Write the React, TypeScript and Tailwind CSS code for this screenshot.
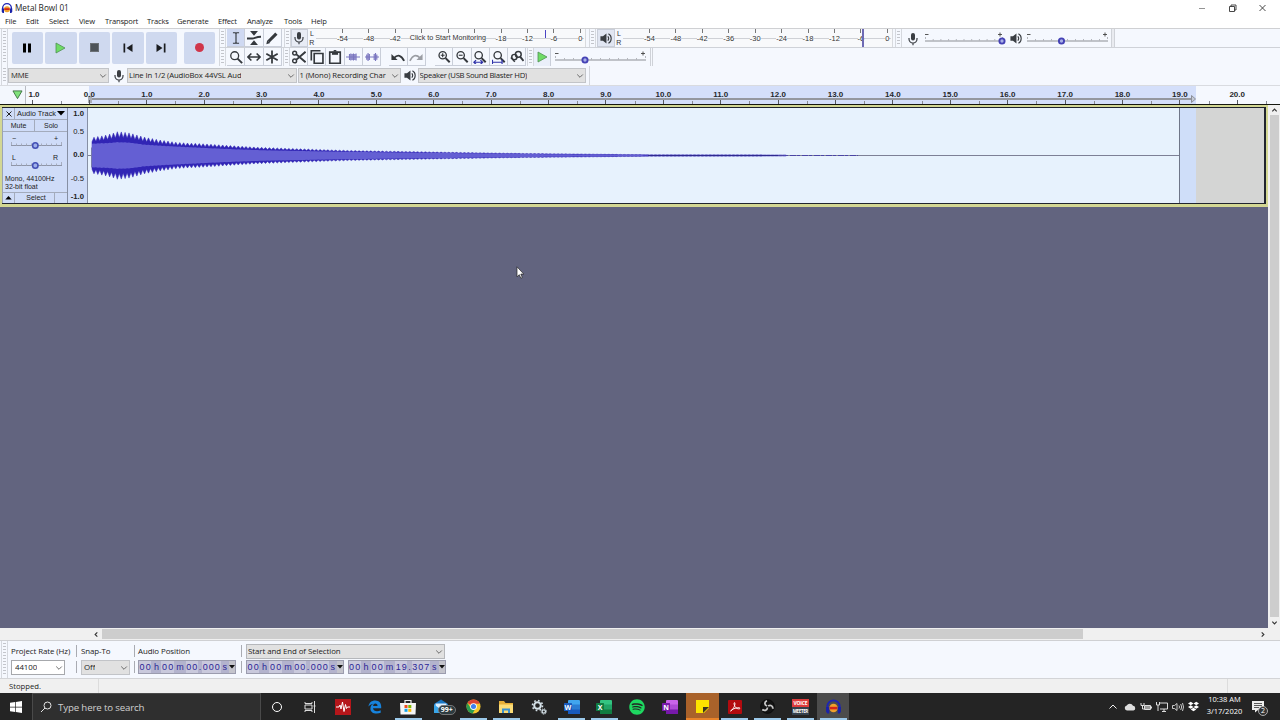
import type { ReactNode } from 'react';
import { FaDropbox, FaSpotify } from 'react-icons/fa';

const menu = [
  { label: 'File', w: 'w-[21px]' },
  { label: 'Edit', w: 'w-[23px]' },
  { label: 'Select', w: 'w-[30px]' },
  { label: 'View', w: 'w-[26px]' },
  { label: 'Transport', w: 'w-[42px]' },
  { label: 'Tracks', w: 'w-[30px]' },
  { label: 'Generate', w: 'w-[41px]' },
  { label: 'Effect', w: 'w-[29px]' },
  { label: 'Analyze', w: 'w-[37px]' },
  { label: 'Tools', w: 'w-[27px]' },
  { label: 'Help', w: 'w-[24px]' },
];

const playLevels = ['-54', '-48', '-42', '-36', '-30', '-24', '-18', '-12', '-6', '0'];
const recordLevels = ['-54', '-48', '-42', '', '', '', '-18', '-12', '-6', '0'];

const timeCells = [
  'w-[6px]', 'w-[6.5px]', 'w-[10px] bg-[#b3b3cd]', 'w-[6px]', 'w-[7px]', 'w-[11.5px] bg-[#b3b3cd]', 'w-[6px]',
  'w-[6px]', 'w-[4.5px] bg-[#b3b3cd]', 'w-[6px]', 'w-[6px]', 'w-[6.5px]', 'w-[8.5px] bg-[#b3b3cd]',
];

// envelope of the recording: [x, peak, rms] in pixels
const envelope = [
  [4, 18, 12], [16, 20, 12.5], [24, 22, 13], [30, 24, 13.5], [42, 22.5, 13], [56, 18.5, 11], [72, 15.5, 10],
  [90, 13, 9], [120, 11.5, 7.5], [150, 9.5, 6.2], [172, 8.2, 5.4], [220, 6.4, 4.4], [262, 5, 3.7],
  [342, 3.6, 2.7], [412, 2.4, 1.9], [452, 1.9, 1.4], [512, 1.3, 0.9], [562, 0.8, 0.3], [690, 0.6, 0.2], [1092, 0.35, 0.2],
];

function levelAt(x: number, k: number) {
  for (let i = 1; i < envelope.length; i++) {
    const a = envelope[i - 1];
    const b = envelope[i];
    if (x <= b[0]) return a[k] + ((b[k] - a[k]) * (x - a[0])) / (b[0] - a[0]);
  }
  return 0.3;
}

function wavePath(k: number, depth: number) {
  const top: string[] = [];
  const bottom: string[] = [];
  for (let i = 0; i * 1.95 + 4 < 700; i++) {
    const x = i * 1.95 + 4;
    const amp = levelAt(x, k) * (i % 2 ? 1 : 1 - depth);
    top.push(`${x.toFixed(1)},${(48 - amp).toFixed(2)}`);
    bottom.unshift(`${x.toFixed(1)},${(48 + amp).toFixed(2)}`);
  }
  return `M${top.concat(bottom).join('L')}Z`;
}

function Grip({ className = '' }: { className?: string }) {
  return (
    <div className={`flex h-full w-[7px] shrink-0 justify-center border-x border-[#d5d8de] py-[2px] ${className}`}>
      <div className="w-[3px] bg-[repeating-linear-gradient(#c3c5cb_0_1px,transparent_1px_3px)]"></div>
    </div>
  );
}

function Mic({ className = '' }: { className?: string }) {
  return (
    <svg viewBox="0 0 12 14" className={`h-[14px] w-[12px] shrink-0 ${className}`} fill="none" stroke="#3a3e43">
      <rect x="4" y="1" width="4" height="7.5" rx="2" fill="#3a3e43" stroke="none" />
      <path d="M2 6v1a4 4 0 0 0 8 0V6M6 11v2.2" strokeWidth="1.2" />
    </svg>
  );
}

function Speaker({ className = '' }: { className?: string }) {
  return (
    <svg viewBox="0 0 14 14" className={`h-[13px] w-[14px] shrink-0 ${className}`} fill="none" stroke="#3a3e43">
      <path d="M1 4.7h2.7L7.5 1.5v11L3.7 9.3H1z" fill="#3a3e43" stroke="none" />
      <path d="M9 4.6q1.8 2.4 0 4.8M9.6 1.8c4 1.9 4 8.5 0 10.4" strokeWidth="1.2" />
    </svg>
  );
}

function Chevron() {
  return (
    <svg viewBox="0 0 8 6" className="h-[6px] w-[8px] shrink-0" fill="none" stroke="#4b4b4b" strokeWidth=".8">
      <path d="M1.2 1.5 4 4.3l2.8-2.8" />
    </svg>
  );
}

function Combo({ children, className = '' }: { children: ReactNode; className?: string }) {
  return (
    <div className={`flex h-[15px] shrink-0 items-center justify-between overflow-hidden border pr-px leading-none whitespace-nowrap ${className}`}>
      <span className="overflow-hidden py-0.5">{children}</span>
      <Chevron />
    </div>
  );
}

function Tool({ children, className = '' }: { children?: ReactNode; className?: string }) {
  return (
    <div className={`flex h-[18px] w-[18.3px] shrink-0 items-center justify-center border-r border-b border-[#c9ced9] ${className}`}>
      <svg viewBox="0 0 16 16" className="size-[14px]" fill="none" stroke="#34383d" strokeWidth="1.7">{children}</svg>
    </div>
  );
}

function Meter({ levels, marker }: { levels: string[]; marker: ReactNode }) {
  return (
    <div className="relative flex h-[18px] w-[270px] shrink-0 border-r border-[#d8dade] bg-[#f8f9fb] pl-[13.3px] font-['Liberation_Sans'] text-[7.5px] leading-none text-[#333]">
      <div className="absolute top-[9px] left-0 h-px w-[268px] bg-[#cfd1d6]"></div>
      {levels.map((l, i) => (
        <div key={i} className="relative flex w-[26.45px] shrink-0 flex-col items-center">
          <div className="h-[4px] w-px bg-[#777]"></div>
          {l && <span className="mt-[2px] bg-[#f8f9fb]">{l}</span>}
        </div>
      ))}
      {marker}
    </div>
  );
}

function LeftRight() {
  return (
    <div className="flex w-[8px] shrink-0 flex-col items-center justify-between py-px font-['Liberation_Sans'] text-[7px] leading-none text-[#333]">
      <span>L</span>
      <span>R</span>
    </div>
  );
}

function Slider({ width, knob, className = '' }: { width: number; knob: number; className?: string }) {
  const step = (width - 1) / 10;
  return (
    <svg className={`h-[14px] shrink-0 overflow-visible ${className}`} width={width} viewBox={`0 0 ${width} 14`} fill="none">
      <path d={`M0 2.500h3.500M${width - 5} 2.500h4M${width - 3} .500v4`} stroke="#444" strokeWidth=".9" />
      <path d={`M0 9h${width}`} stroke="#8b8d93" strokeWidth="1.1" />
      {Array.from({ length: 11 }, (_, i) => (
        <path key={i} d={`M${0.5 + i * step} ${i % 10 ? 7 : 5}v2`} stroke="#b5b7bd" />
      ))}
      <circle cx={knob} cy="9" r="2.6" fill="#a9b0e8" stroke="#4542b5" strokeWidth="1.9" />
    </svg>
  );
}

function TrackSlider({ left, right }: { left: string; right: string }) {
  return (
    <div className="flex h-[19.5px] flex-col px-[8px] text-[7px] leading-none text-[#222]">
      <div className="flex h-[6px] items-center justify-between px-px">
        <span>{left}</span>
        <span>{right}</span>
      </div>
      <svg viewBox="0 0 51 9" className="h-[9px] w-[51px]" fill="none">
        <path d="M0 4.5h51" stroke="#8f96a8" />
        <path d="M.5 1v3M5.5 2.5v2M10.5 2.5v2M15.5 2.5v2M20.5 2.5v2M30.5 2.5v2M35.5 2.5v2M40.5 2.5v2M45.5 2.5v2M50.5 1v3" stroke="#a6adbf" />
        <circle cx="24.3" cy="4.5" r="2.7" fill="#9fb0ea" stroke="#4450b5" strokeWidth="1.6" />
      </svg>
    </div>
  );
}

function TimeBox({ value }: { value: string }) {
  return (
    <div className="flex h-[14px] w-[98px] shrink-0 border border-[#9b9cae] bg-[#c9c9dc] font-['Liberation_Sans'] text-[9px] leading-[13px] text-[#2b2496]">
      {value.split('').map((c, i) => (
        <span key={i} className={`text-center ${timeCells[i]}`}>{c}</span>
      ))}
      <div className="flex flex-1 items-center justify-center bg-[#c4c4cc]">
        <svg viewBox="0 0 6 4" className="h-[4px] w-[6px]"><path d="M0 0h6L3 3.5z" fill="#111" /></svg>
      </div>
    </div>
  );
}

function Separators({ className = '' }: { className?: string }) {
  return (
    <div className={`flex shrink-0 flex-col gap-1 pt-[4px] pl-[2px] ${className}`}>
      <div className="h-[12px] w-px bg-[#a9abb2]"></div>
      <div className="h-[12px] w-px bg-[#a9abb2]"></div>
    </div>
  );
}

function Lens({ children }: { children?: ReactNode }) {
  return (
    <>
      <circle cx="6.5" cy="6" r="4.2" strokeWidth="1.5" />
      <path d="m9.8 9.3 4.700 4.700" strokeWidth="2.3" />
      {children}
    </>
  );
}

function Headphones({ className = '' }: { className?: string }) {
  return (
    <svg viewBox="0 0 16 16" className={className} fill="none">
      <circle cx="8" cy="9.5" r="4" fill="#f0a02c" />
      <path d="M4.5 9.5h7" stroke="#d5251b" strokeWidth="2.4" />
      <path d="M2.2 10V8a5.8 5.8 0 0 1 11.6 0v2" stroke="#1d25b5" strokeWidth="1.8" />
      <path d="M1 8.5h3v6H2.2L1 13zM15 8.5h-3v6h1.8L15 13z" fill="#1a22a8" />
    </svg>
  );
}

function TransportButton({ children, className = '' }: { children: ReactNode; className?: string }) {
  return (
    <div className={`flex h-[32px] w-[31.5px] items-center justify-center rounded-[2px] bg-[#cfd9ef] ${className}`}>{children}</div>
  );
}

function Toolbars() {
  return (
    <div className="flex h-[38px] border-t border-[#cfd0d3] bg-[#f5f8fe]">
      <Grip className="ml-px" />
      <div className="flex w-[211px] shrink-0 gap-[2px] pt-[2.5px] pl-[3.5px]">
        <TransportButton>
          <svg viewBox="0 0 10 10" className="size-[10px]"><path d="M1 .5h3v9H1zM6 .5h3v9H6z" /></svg>
        </TransportButton>
        <TransportButton>
          <svg viewBox="0 0 11 12" className="h-[12px] w-[11px]"><path d="M1 1v10l9-5z" fill="#6fdc66" stroke="#4f8f54" strokeWidth=".8" /></svg>
        </TransportButton>
        <TransportButton>
          <div className="size-[9px] border border-[#6b7075] bg-[#4d5358]"></div>
        </TransportButton>
        <TransportButton>
          <svg viewBox="0 0 10 10" className="size-[10px]"><path d="M.5.5h1.7v9H.5zM9.5 1v8L3.5 5z" fill="#1b1d20" /></svg>
        </TransportButton>
        <TransportButton>
          <svg viewBox="0 0 10 10" className="size-[10px]"><path d="M9.5.5H7.8v9h1.7zM.5 1v8l6-4z" fill="#1b1d20" /></svg>
        </TransportButton>
        <TransportButton className="ml-[4.5px]">
          <div className="size-[9.5px] rounded-full bg-[#d0364a]"></div>
        </TransportButton>
      </div>

      <div className="flex flex-1 flex-col">
        <div className="flex h-[19px] border-b border-[#cfd2d8]">
          <Grip className="mr-px" />
          <Tool className="bg-[#cfd9f2]"><path d="M4.500 2h2.700l.8.800.8-.800h2.700M8 3v10M4.500 14h2.700l.8-.800.8.800h2.700" strokeWidth="1.3" /></Tool>
          <Tool>
            <path d="M3.500 0h9L8 5.500zM3.500 16h9L8 10.500z" fill="#34383d" stroke="none" />
            <path d="M-1 8.500h7c3 0 4-2 11-2" strokeWidth="2.200" />
          </Tool>
          <Tool><path d="M4 12 13 3" strokeWidth="3.600" /><path d="M1.500 15l1-4.500L6 13.800z" fill="#34383d" stroke="none" /></Tool>
          <Grip className="ml-[2px]" />
          <div className="flex h-[18px] w-[17px] items-center justify-center border border-[#c9ced9] bg-[#e8ecf5]"><Mic /></div>
          <LeftRight />
          <Meter
            levels={recordLevels}
            marker={
              <>
                <div className="absolute top-[5px] left-[87px] w-[90px] text-center text-[7.2px] whitespace-nowrap">
                  <span className="bg-[#f8f9fb] pb-px">Click to Start Monitoring</span>
                </div>
                <div className="absolute top-px left-[229px] h-[8px] w-[1.5px] bg-[#4a44c4]"></div>
              </>
            }
          />
          <Grip className="mr-px ml-[3px]" />
          <div className="flex h-[18px] w-[18px] items-center justify-center border border-[#c9ced9] bg-[#e1e6f2]"><Speaker /></div>
          <LeftRight />
          <Meter levels={playLevels} marker={<div className="absolute top-0 left-[239px] h-[18px] w-[2px] bg-[#6e6ab4]"></div>} />
          <Grip className="mr-[5px] ml-[2px]" />
          <Mic className="mt-[3px]" />
          <Slider width={78} knob={77} className="mt-[3px] ml-[6px]" />
          <Speaker className="mt-[3px] ml-[6px]" />
          <Slider width={81} knob={34.5} className="mt-[3px] ml-[4px]" />
          <div className="ml-[3px] h-[18px] w-[4px] border-x border-[#cfd2d8] bg-[#e9ebf0]"></div>
        </div>

        <div className="flex h-[19px] border-b border-[#cfd2d8]">
          <Grip className="mr-px" />
          <Tool><circle cx="6.500" cy="6.500" r="4.500" strokeWidth="1.500" /><path d="m9.800 9.800 5.200 5.200" strokeWidth="2.200" /></Tool>
          <Tool><path d="M1 8h14M5 4 1 8l4 4M11 4l4 4-4 4" strokeWidth="1.900" /></Tool>
          <Tool><path d="M8 .500v15M1.500 4.200l13 7.600M14.500 4.200l-13 7.600" strokeWidth="2" /></Tool>
          <Grip className="ml-px" />
          <Tool>
            <circle cx="3" cy="3.500" r="2.200" />
            <circle cx="3" cy="12.500" r="2.200" />
            <path d="m5 5 10.500 9M5 11l10.500-9" strokeWidth="2.200" />
          </Tool>
          <Tool><path d="M12 .800H1.500V12" strokeWidth="1.900" /><path d="M4.800 4h10v11.200h-10z" strokeWidth="1.900" /></Tool>
          <Tool><path d="M2 2.500h12v12.700H2z" strokeWidth="1.900" /><path d="M4.500 2h7v3.500h-7z" fill="#34383d" stroke="none" /><path d="M6.500.900h3" /></Tool>
          <Tool><path d="M0 8h16M4 4.500v7M5.500 4v8M7 4.500v7M8.500 4v8M10 4.500v7M11.500 4v8" stroke="#7a76c0" strokeWidth="1.300" /></Tool>
          <Tool><path d="M0 8h16M2 5v6M3.500 3.500v9M5 4.500v7M10.500 4.500v7M12 3.500v9M13.500 5v6" stroke="#7a76c0" strokeWidth="1.300" /></Tool>
          <div className="w-[8px]"></div>
          <Tool><path d="M3.500 9Q10 2.500 15 12.500" strokeWidth="2.200" /><path d="M.500 4.500v7h7z" fill="#34383d" stroke="none" /></Tool>
          <Tool><path d="M12.500 9Q6 2.500 1 12.500" stroke="#9a9da3" strokeWidth="1.800" /><path d="M15.500 4.500v7h-7z" fill="#9a9da3" stroke="none" /></Tool>
          <div className="w-[9px]"></div>
          <Tool><Lens><path d="M4.300 6h4.400M6.500 3.800v4.400" strokeWidth="1.300" /></Lens></Tool>
          <Tool><Lens><path d="M4.300 6h4.400" strokeWidth="1.300" /></Lens></Tool>
          <Tool><Lens><path d="M1 14h10M3.500 11.500 1 14l2.500 2.500M8.500 11.500 11 14l-2.500 2.500" stroke="#2e31a8" strokeWidth="1.400" /></Lens></Tool>
          <Tool><Lens><path d="M0 14h12M.500 11v5M11.500 11v5" stroke="#2e31a8" strokeWidth="1.400" /></Lens></Tool>
          <Tool><path d="m1 8.500 4.500 5" /><circle cx="5" cy="8" r="3" /><circle cx="9.500" cy="5" r="3.300" /><path d="m11.500 7.500 4 5" strokeWidth="2.200" /></Tool>
          <Grip className="ml-px" />
          <div className="flex h-[18px] w-[17px] items-center justify-center border-r border-[#c9ced9] bg-[#eaeffa]">
            <svg viewBox="0 0 11 12" className="h-[12px] w-[11px]"><path d="M1 1v10l9-5z" fill="#6fdc66" stroke="#4f8f54" strokeWidth=".8" /></svg>
          </div>
          <Slider width={91} knob={30} className="mt-[3px] ml-[4px]" />
          <div className="ml-[4px] h-[18px] w-[3px] border-x border-[#cfd2d8]"></div>
        </div>
      </div>
    </div>
  );
}

function DeviceBar() {
  return (
    <div className="flex h-[19px] items-center bg-[#f5f8fe] text-[7.7px] tracking-[-.015em] text-[#222]">
      <Grip className="ml-px" />
      <Combo className="w-[101px] border-[#c2c4c8] bg-[#e1e1e1] pl-[2px]">MME</Combo>
      <Mic className="ml-[3.5px]" />
      <Combo className="ml-[2px] w-[170px] border-[#c2c4c8] bg-[#e1e1e1] pl-[1.5px]">Line In 1/2 (AudioBox 44VSL Aud</Combo>
      <Combo className="ml-px w-[103px] border-[#c2c4c8] bg-[#e1e1e1] pl-px">1 (Mono) Recording Char</Combo>
      <Speaker className="ml-[2px]" />
      <Combo className="ml-px w-[168px] border-[#c2c4c8] bg-[#e1e1e1] pl-px tracking-[-.035em]">Speaker (USB Sound Blaster HD)</Combo>
      <div className="ml-[3px] h-full w-px bg-[#d3d6dc]"></div>
    </div>
  );
}

function Timeline() {
  return (
    <div className="flex h-[20px] border-t border-b-[1.5px] border-t-[#d9dbe0] border-b-[#15170f] bg-[#f5f8fe]">
      <div className="flex w-[26px] shrink-0 items-center justify-center border-r border-[#b8bbc2] bg-[#f3f7fd] pl-[9px]">
        <svg viewBox="0 0 12 11" className="h-[10px] w-[11px]"><path d="M1 1h10L6 9.5z" fill="#7fe27a" stroke="#3e6f42" /></svg>
      </div>
      <div className="relative flex flex-1 overflow-hidden">
        <div className="absolute top-0 left-[63px] h-full w-[1107px] bg-[#d4dffa]"></div>
        <div className="absolute top-[12px] left-[64px] h-[2px] w-[1104px] bg-[#94979f]"></div>
        <div className="absolute top-[10px] left-[62px] h-[7px] w-[4px] bg-[#a9acb4]"></div>
        <svg viewBox="0 0 5 8" className="absolute top-[9px] left-[1165px] h-[8px] w-[5px]"><path d="M.5.5v7l4-3.5z" fill="#c5cad6" stroke="#8d9098" /></svg>
        <div className="relative -ml-[22.7px] flex font-['Liberation_Sans'] text-[8px] font-bold text-[#26282c]">
          {Array.from({ length: 22 }, (_, i) => (
            <div key={i} className="flex w-[57.4px] shrink-0 flex-col items-center">
              <span className={i === 0 ? 'mt-[5px] ml-[4px] h-[10px] leading-none' : 'mt-[5px] h-[10px] leading-none'}>{Math.abs(i - 1)}.0</span>
              <div className="flex w-full justify-between">
                <div></div>
                <div className="h-[4px] w-px bg-[#55585e]"></div>
                <div className="-mr-px h-[3px] w-px self-end bg-[#888b93]"></div>
              </div>
            </div>
          ))}
        </div>
      </div>
    </div>
  );
}

function Track() {
  return (
    <div className="flex h-[102px] border-2 border-b-[3px] border-[#d3d793] bg-[#cfdcf6]">
      <div className="flex w-full border-t border-r-2 border-b-[1.5px] border-[#20242e]">
        <div className="flex w-[65px] shrink-0 flex-col border-l border-[#9aa3b5] bg-[#cfdcf8] font-['Liberation_Sans'] text-[7px] text-[#222]">
          <div className="flex h-[12px] items-center border-b border-[#a3abbc] leading-none">
            <div className="flex h-full w-[12px] items-center justify-center border-r border-[#a3abbc]">
              <svg viewBox="0 0 6 6" className="size-[6px]" stroke="#222"><path d="m.5.5 5 5m0-5-5 5" /></svg>
            </div>
            <span className="ml-[2px] text-[7.4px] whitespace-nowrap">Audio Track</span>
            <svg viewBox="0 0 8 5" className="ml-px h-[5px] w-[8px] shrink-0"><path d="M0 0h8L4 4.5z" /></svg>
          </div>
          <div className="flex h-[12px] items-center border-b border-[#a3abbc] leading-none">
            <div className="flex h-full w-[32px] items-center justify-center border-r border-[#a3abbc]">Mute</div>
            <div className="flex-1 text-center">Solo</div>
          </div>
          <div className="pt-[3px]">
            <TrackSlider left="−" right="+" />
            <TrackSlider left="L" right="R" />
          </div>
          <div className="mt-px pl-[2px] leading-[8px] whitespace-nowrap">
            <p>Mono, 44100Hz</p>
            <p>32-bit float</p>
          </div>
          <div className="mt-auto flex h-[11px] border-t border-[#a3abbc]">
            <div className="flex w-[12px] items-center justify-center border-r border-[#a3abbc]">
              <svg viewBox="0 0 8 5" className="h-[4px] w-[7px]"><path d="M0 4.5h8L4 0z" /></svg>
            </div>
            <div className="w-[40px] border-r border-[#a3abbc] pl-[3px] text-center leading-[10px]">Select</div>
          </div>
        </div>

        <div className="flex w-[21px] shrink-0 flex-col justify-between border-x border-[#868fa3] bg-[#cfdcf8] pt-[1.5px] pr-[3px] pb-[2px] text-right font-['Liberation_Sans'] text-[7.7px] leading-none text-[#222]">
          <span className="-ml-1 font-bold">1.0</span>
          <span className="-ml-1 -translate-y-[2px]">0.5</span>
          <span className="-ml-1 font-bold">0.0</span>
          <span className="-ml-1 translate-y-[2.5px]">-0.5</span>
          <span className="-ml-1 font-bold">-1.0</span>
        </div>

        <div className="h-full w-[1092px] shrink-0 overflow-hidden border-r border-[#6f7688] bg-[#e7f2fd]">
          <svg viewBox="0 .5 1092 96" className="block h-[96px] w-[1092px]" fill="none">
            <path d="M0 48h1092" stroke="#7d8096" />
            <path d="M3.5 40v20" stroke="#8f96a8" />
            <path d={wavePath(1, 0.24)} fill="#3125b5" stroke="#3125b5" strokeWidth=".5" />
            <path d={wavePath(2, 0.03)} fill="#645fd3" />
            <path d="M560 48h130" stroke="#2f2a8f" strokeWidth="1.2" />
            <path d="M690 48h80" stroke="#4b45a5" strokeDasharray="6 1 3 2" />
          </svg>
        </div>
        <div className="w-[16px] shrink-0 bg-[#cfdef9]"></div>
        <div className="flex-1 bg-[#d4d5d4]"></div>
      </div>
    </div>
  );
}

function SelectionBar() {
  return (
    <div className="flex h-[38px] border-t border-[#cfd0d3] bg-[#f5f8fe] text-[7.9px] leading-none tracking-[-.01em] text-[#222]">
      <Grip className="ml-px" />
      <div className="flex w-[66px] shrink-0 flex-col pt-[7px] pl-[3px]">
        <span className="h-[12px] whitespace-nowrap">Project Rate (Hz)</span>
        <Combo className="w-[54px] border-[#a6a8ac] bg-white pl-[3px]">44100</Combo>
      </div>
      <Separators className="w-[7px]" />
      <div className="flex w-[51px] shrink-0 flex-col pt-[7px]">
        <span className="h-[12px]">Snap-To</span>
        <Combo className="w-[49px] border-[#c2c4c8] bg-[#e1e1e1] pl-[2px]">Off</Combo>
      </div>
      <Separators className="w-[6px]" />
      <div className="flex w-[101px] shrink-0 flex-col pt-[7px]">
        <span className="h-[12px]">Audio Position</span>
        <TimeBox value="00h00m00.000s" />
      </div>
      <Separators className="w-[7px]" />
      <div className="flex w-[199px] shrink-0 flex-col gap-px pt-[3px]">
        <Combo className="w-[199px] border-[#b5b7bb] bg-[#e1e1e1] pl-px">Start and End of Selection</Combo>
        <div className="flex gap-[3.5px]">
          <TimeBox value="00h00m00.000s" />
          <TimeBox value="00h00m19.307s" />
        </div>
      </div>
    </div>
  );
}

function Letter({ c, dark, mid, light }: { c: string; dark: string; mid: string; light: string }) {
  return (
    <svg viewBox="0 0 18 16" className="h-[16px] w-[18px]">
      <rect x="5" y="1" width="12" height="14" rx="1" fill={light} />
      <path d="M5 5.5h12v9.500H5z" fill={mid} />
      <path d="M5 10.500h12V15H5z" fill={dark} />
      <rect x="1" y="4" width="8" height="8" rx=".5" fill={dark} />
      <text x="5" y="10.500" textAnchor="middle" fontSize="7" fontWeight="700" fontFamily="Open Sans" fill="#fff">{c}</text>
    </svg>
  );
}

function TaskItem({ children, open, className = '' }: { children: ReactNode; open?: boolean; className?: string }) {
  return (
    <div className={`flex h-full w-[32.7px] shrink-0 flex-col items-center ${className}`}>
      <div className="flex h-[25px] items-center justify-center pt-[2px]">{children}</div>
      {open && <div className="h-[2px] w-[27px] bg-[#9cc9ea]"></div>}
    </div>
  );
}

function Taskbar() {
  return (
    <div className="flex h-[27px] bg-[#242424] text-white">
      <div className="flex w-[32px] shrink-0 items-center justify-center">
        <svg viewBox="0 0 12 12" className="size-[12px]" fill="#fff"><path d="M0 1.7 5.200 1v4.700H0zM5.900.900 12 0v5.700H5.900zM0 6.400h5.200V11L0 10.300zM5.900 6.400H12V12l-6.100-.900z" /></svg>
      </div>
      <div className="flex w-[229px] shrink-0 items-center border border-b-0 border-[#4a4a4a] bg-[#2f2f2f] pl-[7px]">
        <svg viewBox="0 0 12 12" className="size-[12px]" fill="none" stroke="#e5e5e5"><circle cx="7.500" cy="4.500" r="3.500" /><path d="M5 7 1 11" /></svg>
        <span className="mt-px ml-[6px] text-[9.7px] leading-none tracking-[-.015em] text-[#cfcfcf]">Type here to search</span>
      </div>

      <TaskItem><div className="size-[10px] rounded-full border-[1.5px] border-white"></div></TaskItem>
      <TaskItem>
        <svg viewBox="0 0 12 12" className="size-[12px]" fill="none" stroke="#ddd"><path d="M1 1v1.500h7V1M1 11V9.500h7V11M1 4h7v4H1zM10.500 0v12M9.500 5h2" /></svg>
      </TaskItem>
      <TaskItem className="pl-px">
        <svg viewBox="0 0 16 16" className="size-[16px]"><path d="M0 0h16v16H0z" fill="#b5161a" /><path d="M1 8h3l1-2 1 4 1.500-7L9 12.500l1.500-7 1 4 1-1.500H15" fill="none" stroke="#fff" /></svg>
      </TaskItem>
      <TaskItem>
        <svg viewBox="0 0 14 14" className="size-[14px]"><path d="M.5 6.500C1 2.500 3.800.500 7.200.500c4 0 6 2.800 6 6.500v1.300H5c.200 2 2 2.900 4 2.900 1.400 0 2.600-.400 3.700-1v2.600c-1.200.500-2.500.800-4 .800-3.800 0-6.300-2-6.300-5.200 0-2.200 1.200-3.900 3.100-4.700C4.200 4.100 2 4.500.500 6.500m4.600-.600h4.400c0-1.400-.700-2.300-2.100-2.300S5.200 4.600 5.100 5.900" fill="#1783dc" /></svg>
      </TaskItem>
      <TaskItem open>
        <svg viewBox="0 0 16 16" className="size-[16px]"><path d="M5 4.500V1.500h6v3" fill="none" stroke="#eee" strokeWidth="1.200" /><path d="M0 4h16l-.500 11.500H.500z" fill="#f6f6f6" /><path d="M4.500 6h3v3h-3z" fill="#f04e1f" /><path d="M8.300 6h3v3h-3z" fill="#7db900" /><path d="M4.500 9.800h3v3h-3z" fill="#10a2e8" /><path d="M8.300 9.800h3v3h-3z" fill="#fdb900" /></svg>
      </TaskItem>
      <TaskItem>
        <div className="relative">
          <svg viewBox="0 0 16 15" className="h-[15px] w-[16px]"><path d="M1 5 8 .500 15 5v9H1z" fill="#1876c4" /><path d="M2.500 4.500h11v5h-11z" fill="#dcefff" /><path d="m1 5.500 7 5 7-5V14H1z" fill="#39a5e8" /></svg>
          <div className="absolute top-[6px] left-[5px] rounded-full border border-[#777] bg-[#2d3b40] px-[2px] text-[7px] leading-[8px] font-bold">99+</div>
        </div>
      </TaskItem>
      <TaskItem open>
        <svg viewBox="0 0 16 16" className="size-[15px]"><circle cx="8" cy="8" r="7.500" fill="#f3c52d" /><path d="M8 8 1.500 4.250a7.500 7.500 0 0 1 13 0L14 5H8z" fill="#dd4435" /><path d="M1.500 4.250a7.500 7.500 0 0 0 5.500 11.200L10.500 9.500 5 9.500z" fill="#2b9d50" /><circle cx="8" cy="8" r="3.600" fill="#fff" /><circle cx="8" cy="8" r="2.700" fill="#3e7ff0" /></svg>
      </TaskItem>
      <TaskItem open>
        <svg viewBox="0 0 16 14" className="h-[14px] w-[16px]"><path d="M1 1h5l1.500 2H15v10H1z" fill="#e5ae38" /><path d="M1 4.500h14V13H1z" fill="#fbdc77" /><path d="M4 13V8.500h8V13h-2v-2.500H6V13z" fill="#3b91d0" /></svg>
      </TaskItem>
      <TaskItem>
        <svg viewBox="0 0 16 16" className="size-[16px]" fill="none" stroke="#d5e1e8"><circle cx="6.500" cy="6.500" r="3.300" strokeWidth="2" /><circle cx="6.500" cy="6.500" r="5" strokeWidth="1.600" strokeDasharray="1.700 2.200" /><circle cx="12.800" cy="12.500" r="1.700" strokeWidth="1.300" /><circle cx="12.800" cy="12.500" r="2.700" strokeDasharray="1 1.100" /></svg>
      </TaskItem>
      <TaskItem open><Letter c="W" dark="#185abd" mid="#2b7cd3" light="#41a5ee" /></TaskItem>
      <TaskItem open><Letter c="X" dark="#107c41" mid="#21a366" light="#33c481" /></TaskItem>
      <TaskItem><FaSpotify className="size-[16px] text-[#1ed760]" /></TaskItem>
      <TaskItem><Letter c="N" dark="#7719aa" mid="#ae4bd5" light="#ca64ea" /></TaskItem>
      <TaskItem className="border-b-2 border-[#e8832a] bg-[#a9622a]">
        <svg viewBox="0 0 13 13" className="size-[13px]"><path d="M0 0h13v8l-5 5H0z" fill="#fde300" /><path d="M7 7h6l-6 6z" fill="#3a3420" /></svg>
      </TaskItem>
      <TaskItem open>
        <svg viewBox="0 0 14 14" className="size-[14px]"><rect width="14" height="14" rx="1" fill="#b30b0f" /><path d="M2.500 11C4 11 8 5 6.700 2.700 5.500 2 6 6 8 7.800c1.500 1.300 4 1.400 4 .400C12 7 5 8 2.500 11z" fill="none" stroke="#fff" strokeWidth=".9" /></svg>
      </TaskItem>
      <TaskItem open>
        <svg viewBox="0 0 16 16" className="size-[15px]" fill="none"><circle cx="8" cy="8" r="7.300" fill="#141414" stroke="#0a0a0a" /><path d="M7.500 7.500C4 6 5 2.500 7.500 2M8.700 7.500c2.800-2 5.500.500 4.800 3M8 9c-.200 3.500-3.700 4-5.500 2" stroke="#c5c5c5" strokeWidth="1.900" /></svg>
      </TaskItem>
      <TaskItem open>
        <div className="flex h-[16px] w-[17px] flex-col items-center overflow-hidden bg-[#35414d] text-[5px] leading-[8px] font-bold tracking-[-.04em]">
          <span className="h-[8px] w-full bg-[#dc3c3c] text-center">VOICE</span>
          <span className="text-[4.500px] tracking-[-.08em]">MEETER</span>
        </div>
      </TaskItem>
      <TaskItem open className="bg-[#4c4c4c]"><Headphones className="size-[17px]" /></TaskItem>

      <div className="ml-auto flex items-center gap-[4px] pr-[14px]">
        <svg viewBox="0 0 8 5" className="h-[5px] w-[8px]" fill="none" stroke="#eee"><path d="m.5 4.500 3.500-3.500 3.500 3.500" /></svg>
        <svg viewBox="0 0 12 8" className="ml-[3px] h-[8px] w-[12px]" fill="#ddd"><path d="M3 7.500a2.600 2.600 0 0 1-.300-5.100A3.600 3.600 0 0 1 9 2.800a2.400 2.400 0 0 1 .500 4.700z" /></svg>
        <svg viewBox="0 0 12 10" className="h-[10px] w-[12px]" fill="none" stroke="#ddd"><path d="M4.500 3.500h6v4h-6z" fill="#999" /><path d="M1 1v2.500h3V1M2.500 3.500V7h2M11.500 4.500v2" /></svg>
        <svg viewBox="0 0 12 11" className="h-[11px] w-[12px]" fill="none" stroke="#ddd"><path d="M4 2h7.500v6H4M6 10.500h4M8 8v2M.500 1v3h3V1M2 4v6" /></svg>
        <svg viewBox="0 0 12 10" className="h-[10px] w-[12px]" fill="none" stroke="#ddd"><path d="M.5 3.500h2l2.500-2v7l-2.500-2h-2zM7 3.500q1 1.500 0 3M8.700 2q2 3 0 6M10.500 1q2 4 0 8" strokeWidth=".9" /></svg>
        <FaDropbox className="size-[11px]" />
        <div className="-mt-[3px] ml-px w-[41px] text-center text-[7.500px] leading-[12px] whitespace-nowrap">
          <p>10:38 AM</p>
          <p>3/17/2020</p>
        </div>
        <div className="relative ml-[3px] w-[14px]">
          <svg viewBox="0 0 12 12" className="size-[12px]"><path d="M0 0h12v9H6l-3 2.500V9H0z" fill="#eee" /><path d="M2 2.500h8M2 4.500h8M2 6.500h5" stroke="#333" strokeWidth=".8" /></svg>
          <div className="absolute top-[5px] left-[6px] size-[10px] rounded-full border border-[#aaa] bg-[#333] text-center text-[7px] leading-[8px]">2</div>
        </div>
      </div>
    </div>
  );
}

export default function App() {
  return (
    <div className="relative flex h-[720px] w-[1280px] flex-col overflow-hidden bg-white font-['Open_Sans',sans-serif]">
      <div className="flex h-[15px] items-center pl-px text-[8.2px] leading-none text-[#222]">
        <Headphones className="mr-[2px] size-[12px]" />
        <span className="mt-[2px]">Metal Bowl 01</span>
        <svg viewBox="0 0 70 10" className="mr-[12px] ml-auto h-[10px] w-[70px]" fill="none" stroke="#333" strokeWidth=".9">
          <path d="M1 5.500h6" stroke="#888" />
          <path d="M31.500 3.500h5v5h-5zM33 3.500V2h5v5h-1.500M61.500 2l6 6m0-6-6 6" />
        </svg>
      </div>
      <div className="flex h-[13px] items-center pl-[5px] text-[7.6px] leading-none tracking-[-.025em] text-[#222]">
        {menu.map((m) => (
          <span key={m.label} className={m.w}>{m.label}</span>
        ))}
      </div>
      <Toolbars />
      <DeviceBar />
      <Timeline />

      <div className="flex h-[523px]">
        <div className="flex w-[1268px] flex-col bg-[#62647f]">
          <Track />
        </div>
        <div className="flex flex-1 flex-col items-center bg-[#f0f0f0] pl-px">
          <svg viewBox="0 0 8 6" className="my-[2px] h-[6px] w-[7px]" fill="none" stroke="#333" strokeWidth="1.300"><path d="m1.500 4.500 2.500-2.500 2.500 2.500" /></svg>
          <div className="h-[502px] w-[9px] bg-[#cdcdcd]"></div>
          <svg viewBox="0 0 8 6" className="mt-[3px] h-[6px] w-[7px]" fill="none" stroke="#333" strokeWidth="1.300"><path d="m1.500 1.500 2.500 2.500 2.500-2.500" /></svg>
        </div>
      </div>
      <div className="flex h-[12px] items-center bg-[#f0f0f0] pl-[93px]">
        <svg viewBox="0 0 6 8" className="h-[7px] w-[6px]" fill="none" stroke="#333" strokeWidth="1.300"><path d="M4.500 1.500 2 4l2.500 2.500" /></svg>
        <div className="ml-[3px] h-[10px] w-[981px] bg-[#cdcdcd]"></div>
        <svg viewBox="0 0 6 8" className="mr-[14px] ml-auto h-[7px] w-[6px]" fill="none" stroke="#333" strokeWidth="1.300"><path d="M1.500 1.500 4 4 1.500 6.500" /></svg>
      </div>
      <SelectionBar />
      <div className="flex h-[15px] items-center border-t border-[#d3d4d7] bg-[#f0f0f0] text-[7.7px] leading-none text-[#222]">
        <div className="flex h-full w-[99px] items-center border-r border-[#dcdcdc] pt-[2px] pl-[9px]">Stopped.</div>
        <div className="h-full w-[1129px] border-r border-[#dcdcdc]"></div>
      </div>
      <Taskbar />

      <svg viewBox="0 0 8 13" className="absolute top-[266px] left-[516px] h-[13px] w-[8px]"><path d="M1 .8v10l2.300-2.100 1.500 3.500 1.500-.700-1.500-3.400h3z" fill="#fff" stroke="#222" strokeWidth=".7" /></svg>
    </div>
  );
}
